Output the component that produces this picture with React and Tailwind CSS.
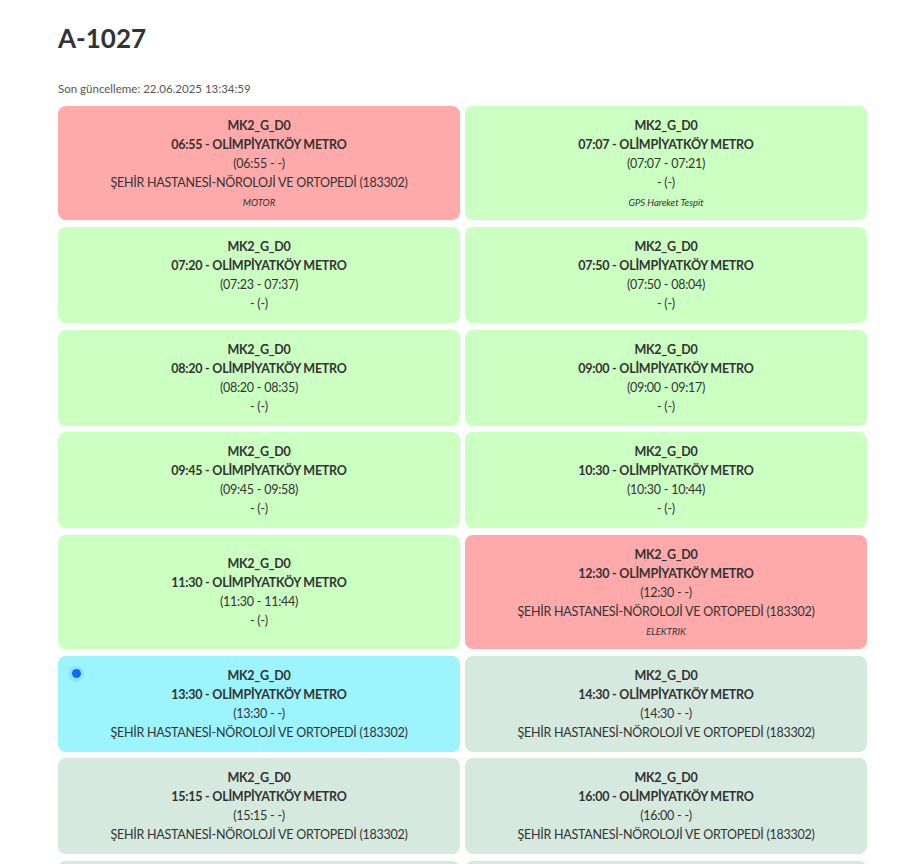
const TRIPS = [
  { time: "06:55", range: "(06:55 - -)", place: "ŞEHİR HASTANESİ-NÖROLOJİ VE ORTOPEDİ (183302)", note: "MOTOR", tone: "red" },
  { time: "07:07", range: "(07:07 - 07:21)", place: "- (-)", note: "GPS Hareket Tespit", tone: "green" },
  { time: "07:20", range: "(07:23 - 07:37)", place: "- (-)", tone: "green" },
  { time: "07:50", range: "(07:50 - 08:04)", place: "- (-)", tone: "green" },
  { time: "08:20", range: "(08:20 - 08:35)", place: "- (-)", tone: "green" },
  { time: "09:00", range: "(09:00 - 09:17)", place: "- (-)", tone: "green" },
  { time: "09:45", range: "(09:45 - 09:58)", place: "- (-)", tone: "green" },
  { time: "10:30", range: "(10:30 - 10:44)", place: "- (-)", tone: "green" },
  { time: "11:30", range: "(11:30 - 11:44)", place: "- (-)", tone: "green" },
  { time: "12:30", range: "(12:30 - -)", place: "ŞEHİR HASTANESİ-NÖROLOJİ VE ORTOPEDİ (183302)", note: "ELEKTRIK", tone: "red" },
  { time: "13:30", range: "(13:30 - -)", place: "ŞEHİR HASTANESİ-NÖROLOJİ VE ORTOPEDİ (183302)", tone: "active" },
  { time: "14:30", range: "(14:30 - -)", place: "ŞEHİR HASTANESİ-NÖROLOJİ VE ORTOPEDİ (183302)", tone: "planned" },
  { time: "15:15", range: "(15:15 - -)", place: "ŞEHİR HASTANESİ-NÖROLOJİ VE ORTOPEDİ (183302)", tone: "planned" },
  { time: "16:00", range: "(16:00 - -)", place: "ŞEHİR HASTANESİ-NÖROLOJİ VE ORTOPEDİ (183302)", tone: "planned" },
  { time: "16:45", range: "(16:45 - -)", place: "ŞEHİR HASTANESİ-NÖROLOJİ VE ORTOPEDİ (183302)", tone: "planned" },
  { time: "17:30", range: "(17:30 - -)", place: "ŞEHİR HASTANESİ-NÖROLOJİ VE ORTOPEDİ (183302)", tone: "planned" },
];

const TONES = {
  red: "bg-[#ffaaaa]",
  green: "bg-[#ccffc2]",
  active: "bg-[#9cf4ff]",
  planned: "bg-[#d6e9de]",
};

function TripCard({ trip }) {
  return (
    <div className={`relative flex flex-col justify-center rounded-lg px-3 py-[10.05px] text-center text-[12.5px] leading-[19px] tracking-[-0.25px] ${TONES[trip.tone]}`}>
      {trip.tone === "active" && (
        <span className="absolute left-[10px] top-[10px] flex h-4 w-4 items-center justify-center rounded-full bg-[#7fd6ff]/50">
          <span className="h-[9px] w-[9px] rounded-full bg-[#0a6cf5]" />
        </span>
      )}
      <div className="font-bold">MK2_G_D0</div>
      <div className="font-bold">{trip.time} - OLİMPİYATKÖY METRO</div>
      <div>{trip.range}</div>
      <div>{trip.place}</div>
      {trip.note && <div className="mt-[4px] text-[9.5px] italic leading-[14px] tracking-normal">{trip.note}</div>}
    </div>
  );
}

export default function App() {
  return (
    <div className="min-h-screen bg-white text-[#333] [font-family:Lato,'Noto_Sans',sans-serif]">
      <div className="w-[809px] pl-[58px] box-content pt-[20px]">
        <h1 className="text-[26px] font-bold leading-[36px]">A-1027</h1>
        <p className="mt-[24px] text-[11.5px] text-[#555]">Son güncelleme: 22.06.2025 13:34:59</p>
        <div className="mt-[9px] grid grid-cols-2 gap-x-[5px] gap-y-[6.6px]">
          {TRIPS.map((t, i) => (
            <TripCard key={i} trip={t} />
          ))}
        </div>
      </div>
    </div>
  );
}
